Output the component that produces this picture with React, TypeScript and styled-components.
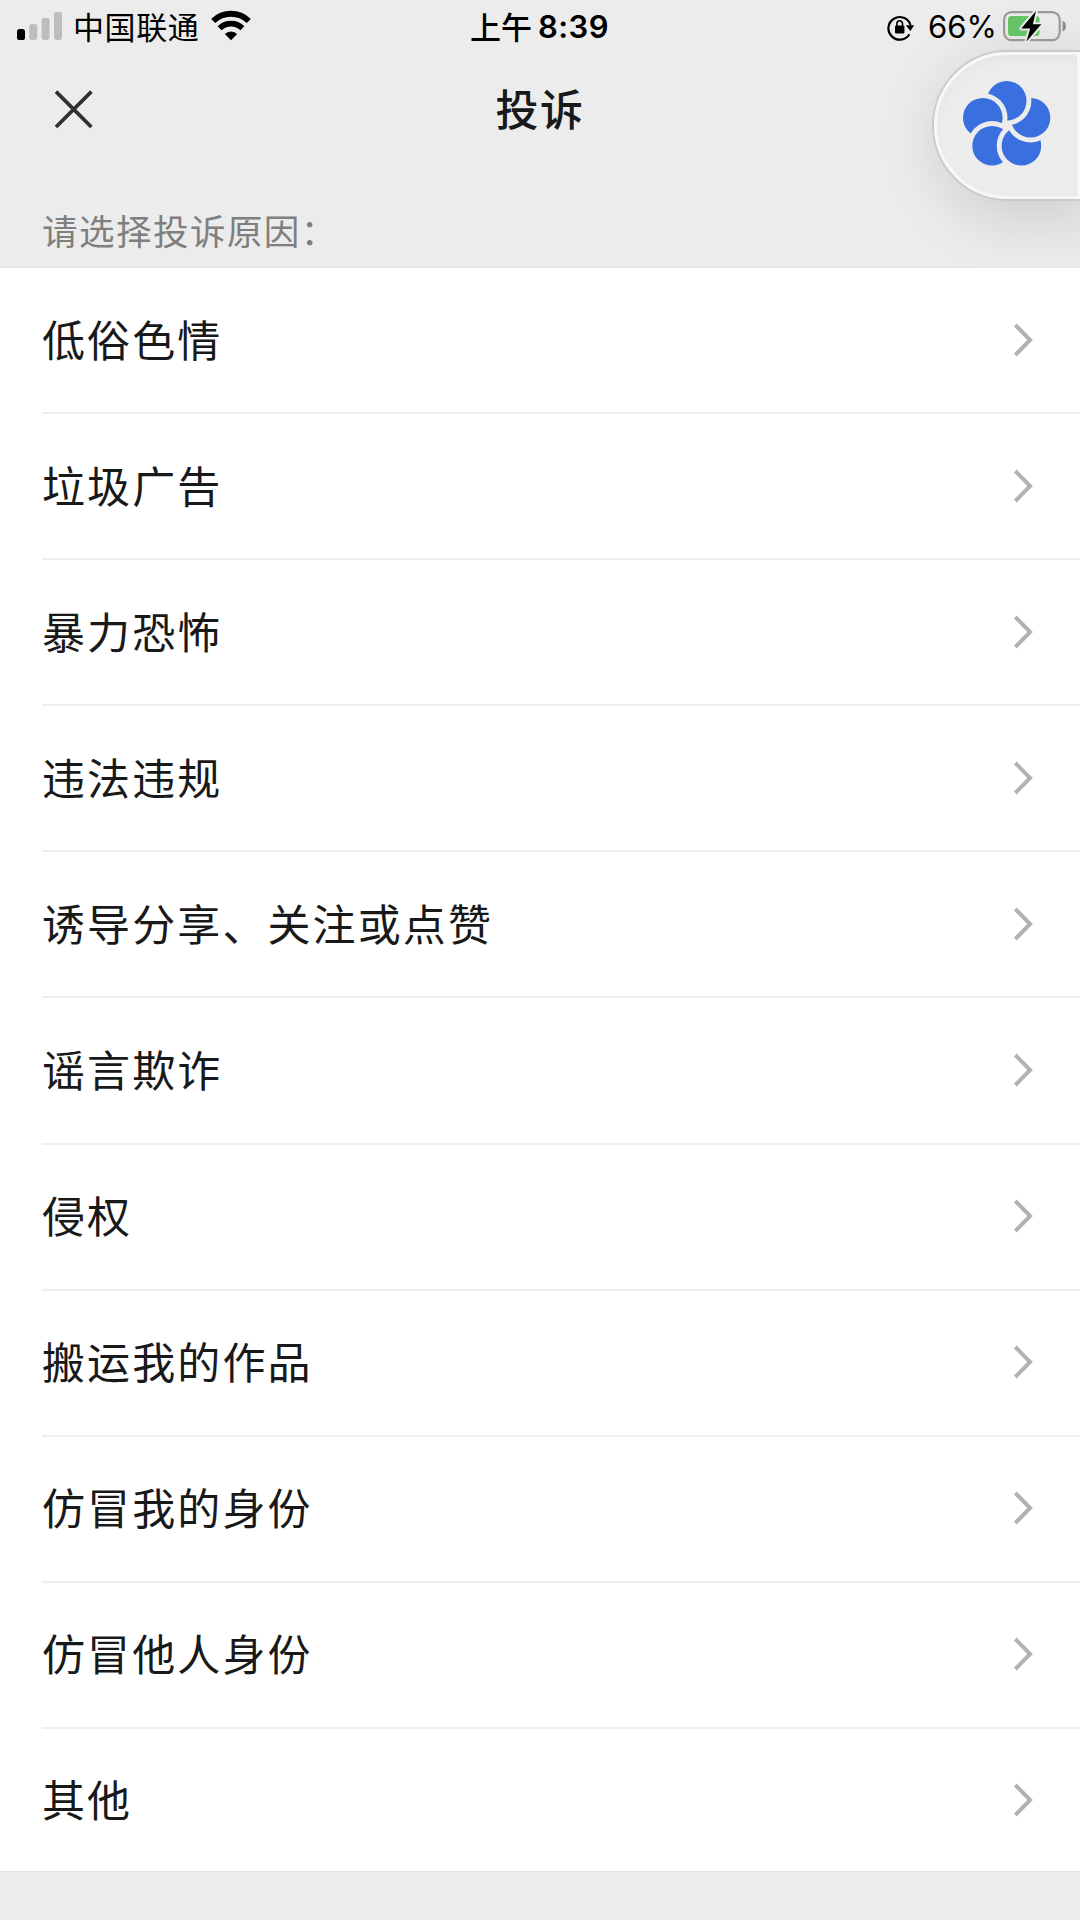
import React from "react";
import styled, { createGlobalStyle } from "styled-components";

const GlobalStyle = createGlobalStyle`
  * { box-sizing: border-box; }
  html, body { margin: 0; padding: 0; background: #ececec; }
  body { font-family: "Noto Sans CJK SC", sans-serif; color: #191919; }
`;

const Screen = styled.div`
  width: 1080px;
  height: 1920px;
  display: flex;
  flex-direction: column;
  position: relative;
  overflow: hidden;
  background: #ececec;
`;

const StatusBar = styled.header`
  height: 54px;
  display: grid;
  grid-template-columns: 1fr auto 1fr;
  align-items: center;
  padding: 0 13px 0 17px;
  color: #000;
  position: relative;
  z-index: 2;
`;

const StatusGroup = styled.div<{ $end?: boolean }>`
  display: flex;
  align-items: center;
  height: 54px;
  justify-content: ${(p) => (p.$end ? "flex-end" : "flex-start")};
`;

const Carrier = styled.span`
  margin: 0 12px 0 10px;
  padding-bottom: 3px;
  font-size: 31px;
  line-height: 51px;
  letter-spacing: 0.6px;
`;

const Clock = styled.div`
  display: flex;
  align-items: center;
  gap: 6px;
  height: 54px;
  line-height: 54px;
  margin-right: 5px;
`;

const Meridiem = styled.span`
  padding-bottom: 3px;
  font-size: 31px;
  line-height: 51px;
  font-weight: 500;
`;

const Time = styled.span`
  font-family: Inter, "Liberation Sans", sans-serif;
  font-size: 31px;
  font-weight: 600;
  letter-spacing: 0.4px;
`;

const Percent = styled.span`
  margin: 0 6px 0 13px;
  font-family: Inter, "Liberation Sans", sans-serif;
  font-size: 31px;
  line-height: 54px;
`;

const NavBar = styled.nav`
  height: 112px;
  display: grid;
  grid-template-columns: 1fr auto 1fr;
  align-items: center;
  padding: 0 54px;
`;

const CloseButton = styled.button`
  width: 40px;
  height: 40px;
  padding: 0;
  border: 0;
  background: none;
  display: flex;
`;

const Title = styled.h1`
  margin: 0 0 7px 0;
  font-size: 43px;
  line-height: 60px;
  font-weight: 500;
  letter-spacing: 1.5px;
`;

const Prompt = styled.p`
  margin: 0;
  height: 101px;
  padding: 36px 0 0 42px;
  font-size: 35.6px;
  line-height: 56px;
  letter-spacing: 1.4px;
  color: #7f7f7f;
`;

const List = styled.ul`
  list-style: none;
  margin: 0;
  padding: 0;
  background: #fff;
  border-top: 1px solid #e5e5e5;
  border-bottom: 1px solid #e5e5e5;
  position: relative;
  z-index: 1;
`;

const Row = styled.li`
  height: 146.1px;
  margin-left: 42px;
  padding: 0 45px 1px 0;
  display: flex;
  align-items: center;
  justify-content: space-between;
  border-bottom: 2px solid #efefef;

  &:last-child {
    height: 142px;
    padding-bottom: 0;
    border-bottom: 0;
  }
`;

const Label = styled.span`
  margin-bottom: 4px;
  font-size: 43px;
  line-height: 64px;
  letter-spacing: 2.1px;
`;

const FloatingTab = styled.div`
  position: absolute;
  top: 50px;
  right: 0;
  width: 148px;
  height: 151px;
  border: 2px solid #cacaca;
  border-right: 0;
  border-radius: 76px 0 0 76px;
  background: #ececec;
  box-shadow: 10px 14px 60px 6px rgba(0, 0, 0, 0.13);
`;

const TabFace = styled.div`
  width: 100%;
  height: 100%;
  border: 3px solid #f7f7f7;
  border-radius: 74px 0 0 74px;
  box-shadow: inset 0 4px 8px rgba(0, 0, 0, 0.03);
  padding: 26px 0 0 26px;
`;

const SignalIcon = () => (
  <svg width="46" height="54" viewBox="0 0 46 54">
    <rect x="0" y="29" width="8" height="11" rx="2.6" fill="#000" />
    <rect x="12.3" y="24" width="8" height="16" rx="2.4" fill="#bdbdbd" />
    <rect x="24.6" y="18" width="8" height="22" rx="2.4" fill="#bdbdbd" />
    <rect x="37" y="12" width="8" height="28" rx="2.4" fill="#bdbdbd" />
  </svg>
);

const WifiIcon = () => (
  <svg width="40" height="54" viewBox="0 0 40 54">
    <g fill="none" stroke="#000">
      <path d="M2.2 21A25.5 25.5 0 0 1 37.8 21" strokeWidth="5.8" />
      <path d="M8.6 28.2A16.4 16.4 0 0 1 31.4 28.2" strokeWidth="5.6" />
    </g>
    <path d="M20 40.2L13.8 34A8.7 8.7 0 0 1 26.2 34Z" fill="#000" />
  </svg>
);

const RotationLockIcon = () => (
  <svg width="28" height="54" viewBox="0 0 28 54">
    <path d="M22.4 34.2A11.3 11.3 0 1 1 23.5 25" fill="none" stroke="#000" strokeWidth="2.2" />
    <path d="M18.8 25.3H27.2L23.4 31Z" fill="#000" />
    <rect x="8" y="25.5" width="9.4" height="8" rx="1" fill="#000" />
    <path d="M9.9 26V23.6A2.8 2.8 0 0 1 15.5 23.6V26" fill="none" stroke="#000" strokeWidth="1.6" />
  </svg>
);

const BatteryIcon = () => (
  <svg width="64" height="54" viewBox="0 0 64 54">
    <rect x="1.1" y="12.1" width="55.6" height="28" rx="7.5" fill="none" stroke="#999" strokeWidth="2.2" />
    <path d="M59.5 20.8C64.2 22 64.2 30.4 59.5 31.4Z" fill="#8f8f8f" />
    <rect x="5" y="16" width="31.5" height="20" rx="3.6" fill="#64c466" />
    <path
      d="M33 11L18.3 28.4H27.2L23.5 41.5L38.3 24.2H29.8Z"
      fill="#000"
      stroke="#e9e9e9"
      strokeWidth="4"
      strokeLinejoin="round"
      paintOrder="stroke"
    />
  </svg>
);

const CloseIcon = () => (
  <svg width="40" height="40" viewBox="0 0 40 40">
    <path d="M2 1.6L37.4 37M37.4 1.6L2 37" stroke="#303030" strokeWidth="3.7" />
  </svg>
);

const ChevronIcon = () => (
  <svg width="22" height="36" viewBox="0 0 22 36">
    <path d="M2.3 3L17.1 18L2.3 33" fill="none" stroke="#b2b2b2" strokeWidth="4" />
  </svg>
);

const PETALS = [
  [43.7, 19.8],
  [67.5, 36.8],
  [58.4, 64.8],
  [29.1, 64.8],
  [19.8, 36.8],
];

const FlowerIcon = () => (
  <svg width="88" height="86" viewBox="0 0 88 86">
    {PETALS.map(([x, y], i) => {
      const [nx, ny] = PETALS[(i + 4) % 5];
      return (
        <g key={i}>
          <mask id={`petal${i}`} maskUnits="userSpaceOnUse" x="0" y="0" width="88" height="86">
            <rect width="88" height="86" fill="#fff" />
            <circle cx={nx} cy={ny} r="24.7" fill="#000" />
          </mask>
          <circle cx={x} cy={y} r="19.8" fill="#3a6fdf" mask={`url(#petal${i})`} />
        </g>
      );
    })}
  </svg>
);

const REASONS = [
  "低俗色情",
  "垃圾广告",
  "暴力恐怖",
  "违法违规",
  "诱导分享、关注或点赞",
  "谣言欺诈",
  "侵权",
  "搬运我的作品",
  "仿冒我的身份",
  "仿冒他人身份",
  "其他",
];

export default function App() {
  return (
    <Screen>
      <GlobalStyle />
      <StatusBar>
        <StatusGroup>
          <SignalIcon />
          <Carrier>中国联通</Carrier>
          <WifiIcon />
        </StatusGroup>
        <Clock>
          <Meridiem>上午</Meridiem>
          <Time>8:39</Time>
        </Clock>
        <StatusGroup $end>
          <RotationLockIcon />
          <Percent>66%</Percent>
          <BatteryIcon />
        </StatusGroup>
      </StatusBar>
      <NavBar>
        <CloseButton aria-label="关闭">
          <CloseIcon />
        </CloseButton>
        <Title>投诉</Title>
      </NavBar>
      <Prompt>请选择投诉原因：</Prompt>
      <List>
        {REASONS.map((reason) => (
          <Row key={reason}>
            <Label>{reason}</Label>
            <ChevronIcon />
          </Row>
        ))}
      </List>
      <FloatingTab>
        <TabFace>
          <FlowerIcon />
        </TabFace>
      </FloatingTab>
    </Screen>
  );
}
